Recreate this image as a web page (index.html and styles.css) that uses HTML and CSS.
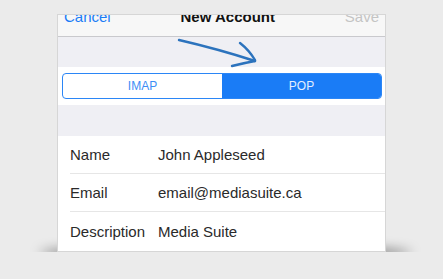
FILE: index.html
```html
<!DOCTYPE html>
<html>
<head>
  <title>New Account</title>
  <link rel="stylesheet" href="styles.css">
</head>
<body>
  <div class="device">
    <div class="screen">
      <!-- Navigation bar (cropped at the top) -->
      <div class="navbar">
        <div class="navbar-inner">
          <span class="nav-cancel">Cancel</span>
          <span class="nav-title">New Account</span>
          <span class="nav-save">Save</span>
        </div>
      </div>

      <div class="spacer spacer-arrow">
        <svg class="arrow" width="326" height="30" viewBox="0 0 326 30">
          <path d="M121 3 Q160 12 197 24" />
          <path d="M182 6 Q191 13 197 23" />
          <path d="M174 29 Q186 26 197 24" />
        </svg>
      </div>

      <div class="segment-row">
        <div class="segmented">
          <div class="segment">IMAP</div>
          <div class="segment active">POP</div>
        </div>
      </div>

      <div class="spacer"></div>

      <ul class="fields">
        <li class="field">
          <span class="field-label">Name</span>
          <span class="field-value">John Appleseed</span>
        </li>
        <li class="field">
          <span class="field-label">Email</span>
          <span class="field-value">email@mediasuite.ca</span>
        </li>
        <li class="field">
          <span class="field-label">Description</span>
          <span class="field-value">Media Suite</span>
        </li>
      </ul>
    </div>
  </div>
</body>
</html>
```

FILE: styles.css
```css
/* Reset styles */
*,
*::before,
*::after {
  box-sizing: border-box;
  margin: 0;
  padding: 0;
}

body {
  font-family: "Liberation Sans", Arial, sans-serif;
  background-color: #ebebeb;
  color: #222;
  padding: 14px 0 0 57px;
}

/* Device frame */
.device {
  position: relative;
  width: 329px;
}

.device::before {
  content: '';
  position: absolute;
  left: -18px;
  right: -26px;
  bottom: -8px;
  height: 14px;
  border-radius: 50%;
  background-color: rgba(0, 0, 0, 0.5);
  filter: blur(6px);
  z-index: -1;
}

.screen {
  height: 238px;
  overflow: hidden;
  border: 1px solid #d6d6d6;
  background-color: #fff;
}

/* Nav bar */
.navbar {
  height: 22px;
  overflow: hidden;
  background-color: #f7f7f7;
  border-bottom: 1px solid #c9c9cd;
}

.navbar-inner {
  display: flex;
  justify-content: space-between;
  align-items: baseline;
  margin-top: -6px;
  padding: 0 6px;
  font-size: 15px;
  line-height: 16px;
}

.nav-cancel {
  color: #1a7cf6;
}

.nav-title {
  font-weight: bold;
  color: #111;
}

.nav-save {
  color: #c4c4c4;
}

/* Grouped spacers */
.spacer {
  height: 31px;
  background-color: #efeff4;
}

.spacer-arrow {
  height: 30px;
}

.arrow {
  display: block;
  overflow: visible;
}

.arrow path {
  fill: none;
  stroke: #2c73bd;
  stroke-width: 2.4;
  stroke-linecap: round;
}

/* Segmented control */
.segment-row {
  height: 38px;
  padding: 6px 3px 0 4px;
  background-color: #fff;
}

.segmented {
  display: flex;
  height: 26px;
  border: 1px solid #2b86f6;
  border-radius: 4px;
  overflow: hidden;
}

.segment {
  flex: 1;
  display: flex;
  align-items: center;
  justify-content: center;
  font-size: 12px;
  color: #3c8ef5;
}

.segment.active {
  background-color: #1a7cf6;
  color: #e3eeff;
}

/* Form fields */
.fields {
  list-style: none;
  padding-left: 12px;
}

.field {
  display: flex;
  align-items: center;
  height: 38px;
  font-size: 15px;
  color: #2a2a2a;
  border-bottom: 1px solid #e6e6e6;
}

.field:last-child {
  border-bottom: none;
}

.field-label {
  width: 88px;
}
```
